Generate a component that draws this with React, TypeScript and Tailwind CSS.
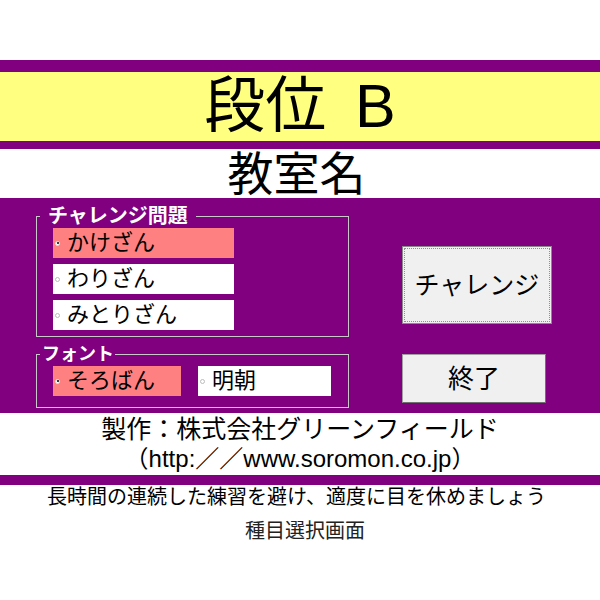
import React from "react";

const FONT = '"Liberation Sans", "Noto Sans CJK JP", sans-serif';

function Radio({ checked }: { checked: boolean }) {
  return checked ? (
    <span className="ml-[2px] w-[5px] h-[5px] rounded-full bg-white border border-[#dddddd] flex items-center justify-center shrink-0">
      <span className="w-[2px] h-[2px] rounded-full bg-black" />
    </span>
  ) : (
    <span className="ml-[2px] w-[5px] h-[5px] rounded-full bg-white border border-[#bbbbbb] shrink-0" />
  );
}

function Option({ label, checked, w }: { label: string; checked: boolean; w: string }) {
  return (
    <div
      className={`${w} h-[30px] flex items-center ${
        checked ? "bg-[#ff8080]" : "bg-white"
      }`}
    >
      <Radio checked={checked} />
      <span className="ml-[7px] text-[22px] leading-none text-black">{label}</span>
    </div>
  );
}

export default function App() {
  return (
    <div className="w-[600px] h-[600px] bg-white flex flex-col text-black" style={{ fontFamily: FONT }}>
      <div className="h-[60px] bg-white" />
      <div className="h-[12px] bg-[#800080]" />
      <div className="h-[69px] bg-[#ffff80] flex items-center justify-center text-[61px] leading-none [word-spacing:12px]">
        段位 B
      </div>
      <div className="h-[8px] bg-[#800080]" />
      <div className="h-[49px] flex items-center justify-center text-[46px] leading-none pr-[7px]">
        教室名
      </div>
      <div className="h-[215px] bg-[#800080] flex pt-[18px] pl-[36px]">
        <div className="w-[313px] flex flex-col">
          <div className="relative border border-[#c8c8c8] pt-[11px] pb-[6px] pl-[16px] flex flex-col gap-[6px]">
            <span className="absolute left-[3px] top-[-13px] pl-[8px] pr-[8px] bg-[#800080] text-white font-bold text-[20px] leading-[24px]">
              チャレンジ問題
            </span>
            <Option label="かけざん" checked w="w-[181px]" />
            <Option label="わりざん" checked={false} w="w-[181px]" />
            <Option label="みとりざん" checked={false} w="w-[181px]" />
          </div>
          <div className="relative mt-[17px] border border-[#c8c8c8] pt-[11px] pb-[11px] pl-[16px] flex">
            <span className="absolute left-[3px] top-[-13px] pl-[2px] pr-[1px] bg-[#800080] text-white font-bold text-[18px] leading-[24px]">
              フォント
            </span>
            <Option label="そろばん" checked w="w-[128px]" />
            <div className="ml-[17px]">
              <Option label="明朝" checked={false} w="w-[133px]" />
            </div>
          </div>
        </div>
        <div className="ml-[53px] pt-[30px] flex flex-col items-start">
          <div className="w-[150px] h-[78px] bg-[#f0f0f0] border border-[#8a8a8a] p-[1px]">
            <div className="w-full h-full border border-dotted border-[#909090] flex items-center justify-center text-[25px] leading-none">
              チャレンジ
            </div>
          </div>
          <div className="mt-[30px] w-[144px] h-[49px] bg-[#f0f0f0] border border-[#a0a0a0] border-r-[#707070] border-b-[#707070] flex items-center justify-center text-[26px] leading-none">
            終了
          </div>
        </div>
      </div>
      <div className="h-[62px] flex flex-col items-center pt-[1px] text-[24px] leading-[30px]">
        <div className="text-[25px]">製作：株式会社グリーンフィールド</div>
        <div>（http:／／www.soromon.co.jp）</div>
      </div>
      <div className="h-[10px] bg-[#800080]" />
      <div className="flex flex-col items-center text-[20px] leading-[24px] text-black">
        <div className="pr-[7px]">長時間の連続した練習を避け、適度に目を休めましょう</div>
        <div className="mt-[10px] pl-[10px] text-[#222222]">種目選択画面</div>
      </div>
    </div>
  );
}
